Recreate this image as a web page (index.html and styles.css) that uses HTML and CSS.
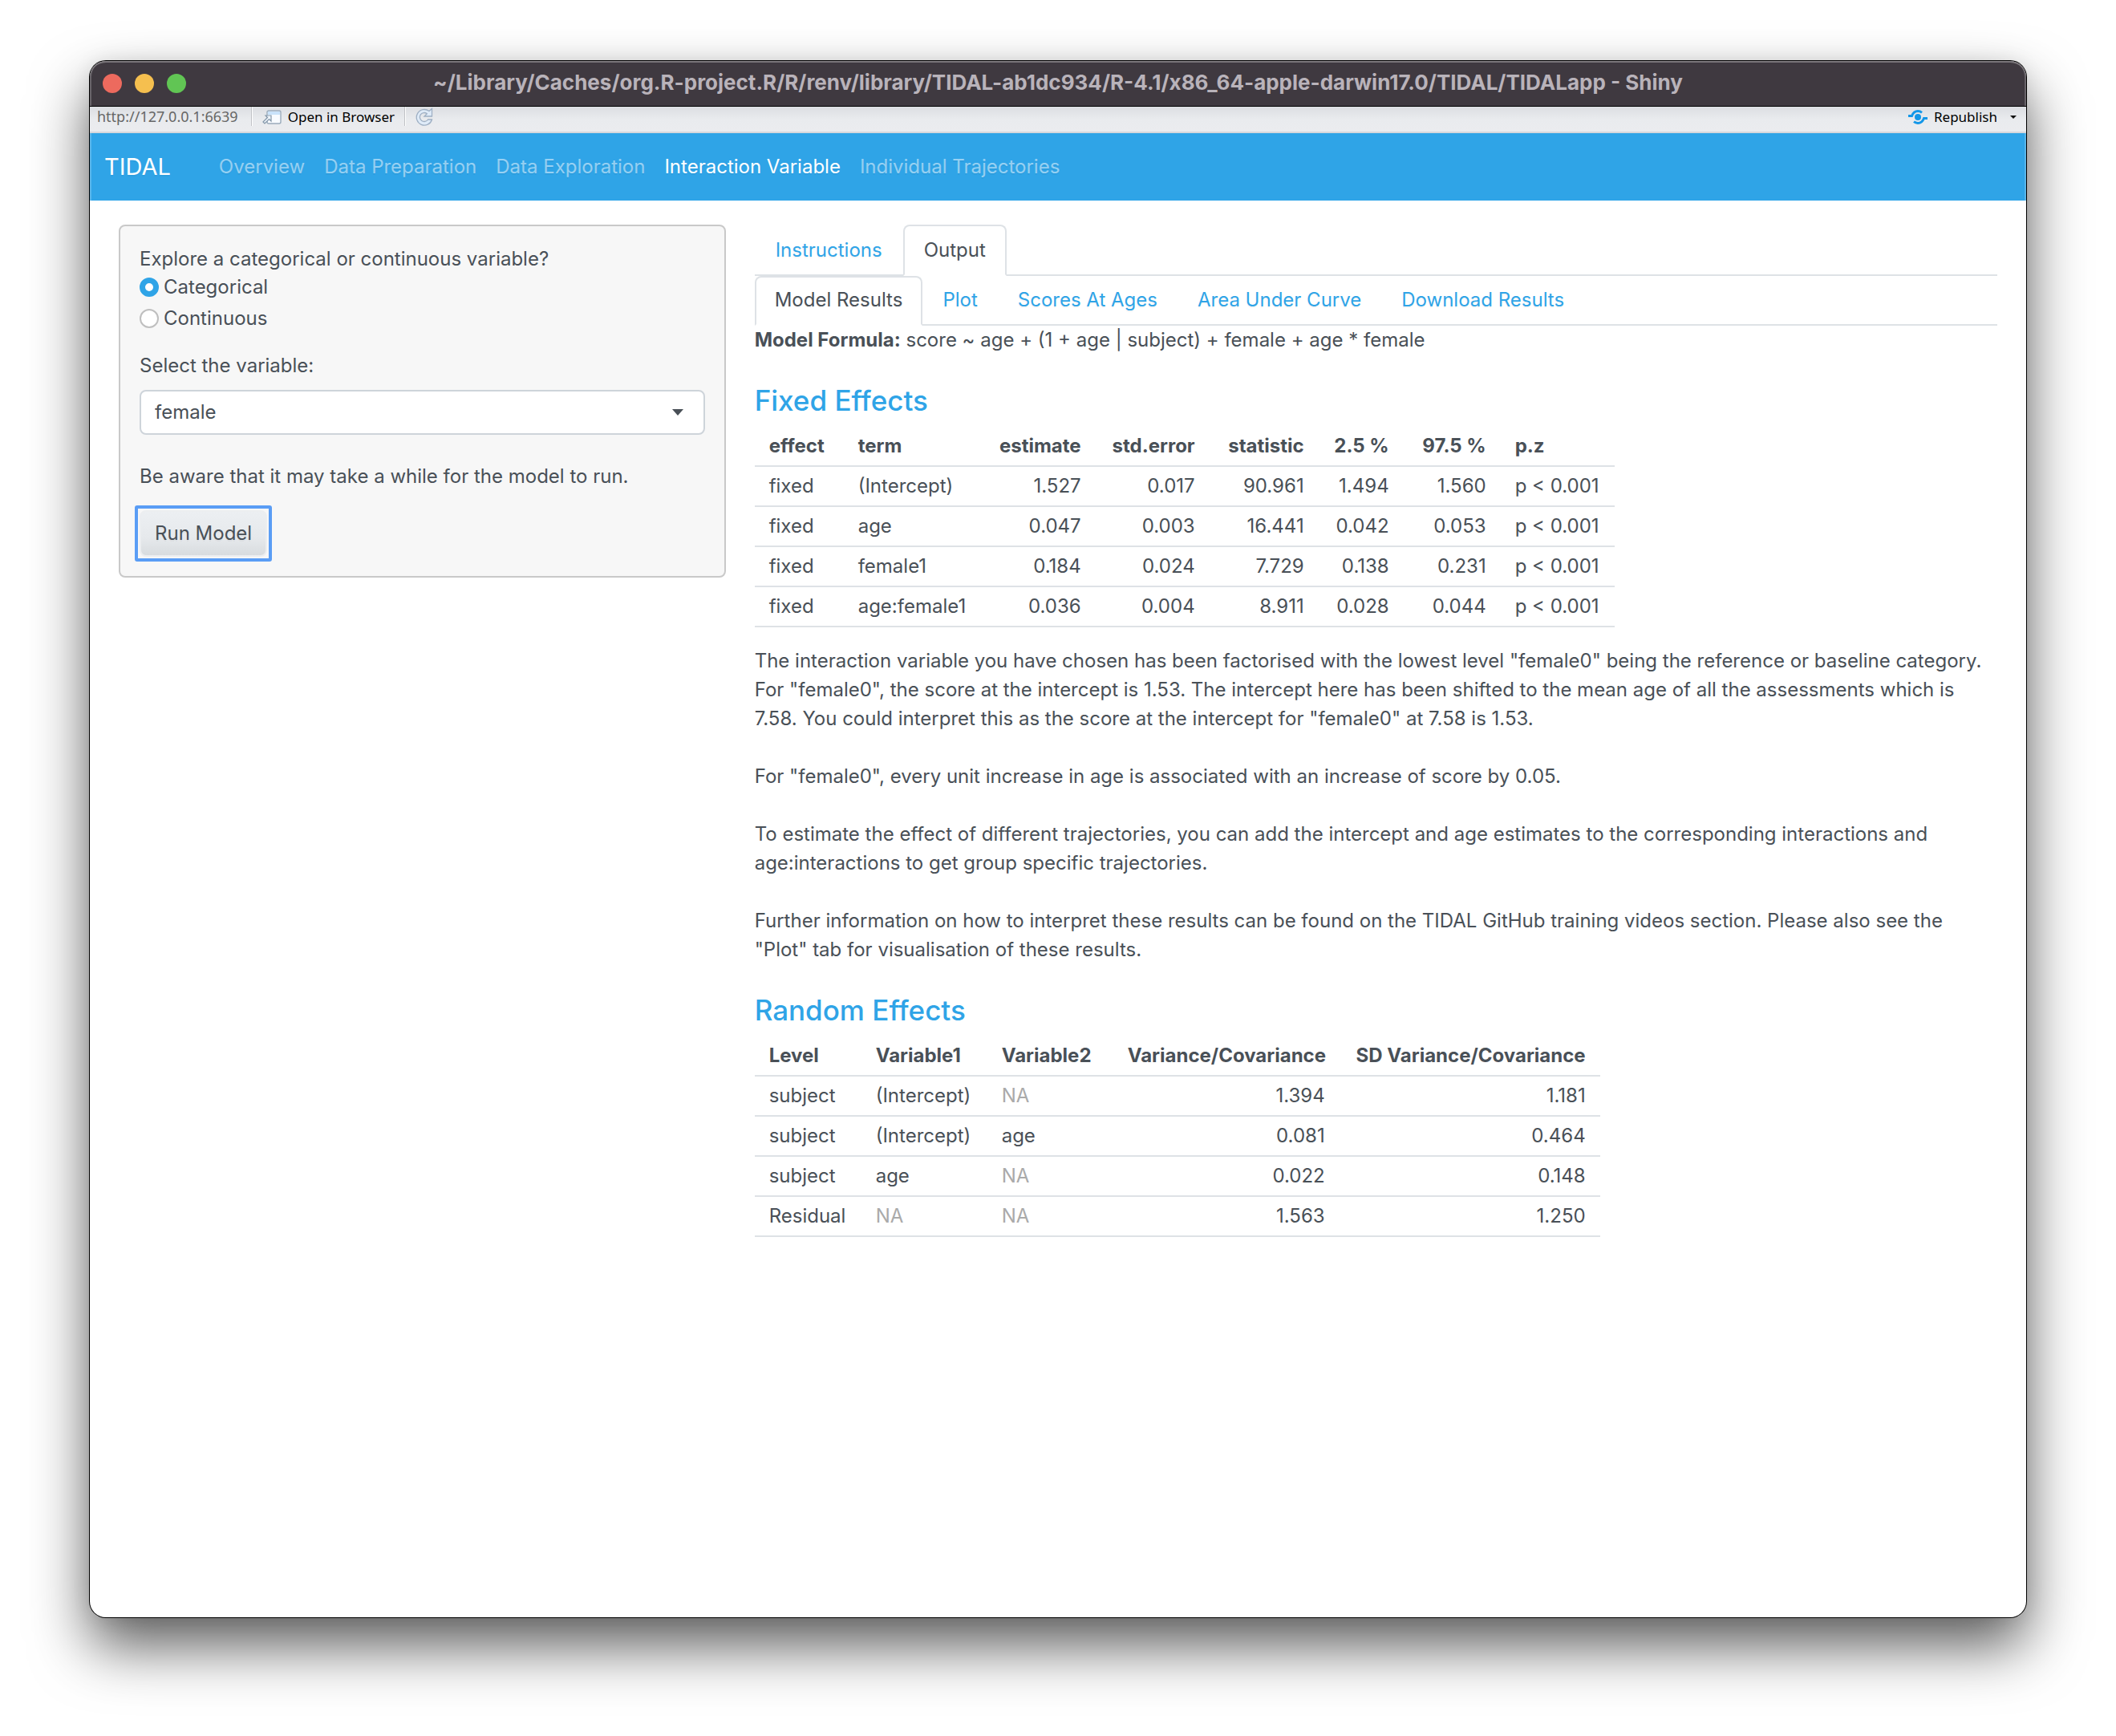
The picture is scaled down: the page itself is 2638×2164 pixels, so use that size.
FILE: index.html
```html
<!DOCTYPE html>
<html lang="en">
<head>
<meta charset="utf-8">
<title>TIDAL</title>
<link rel="stylesheet" href="styles.css">
</head>
<body>
<div class="window">
  <header class="titlebar">
    <div class="lights"><span class="light red"></span><span class="light amber"></span><span class="light green"></span></div>
    <div class="title">~/Library/Caches/org.R-project.R/R/renv/library/TIDAL-ab1dc934/R-4.1/x86_64-apple-darwin17.0/TIDAL/TIDALapp - Shiny</div>
  </header>
  <div class="toolbar">
    <span class="url">http://127.0.0.1:6639</span>
    <span class="divider"></span>
    <button class="tool" type="button">
      <svg width="24" height="18" viewBox="0 0 24 18"><rect x="6" y="1" width="17" height="16" rx="2" fill="#f8fbff" stroke="#9aabbb" stroke-width="1.4"/><path d="M7 2h15v4H7z" fill="#c9e2fa"/><path d="M1 15l5.500-5.500L4 7h7v7l-2.500-2.500L3 17z" fill="#eef4fa" stroke="#8497a9" stroke-width="1.200"/></svg>
      Open in Browser
    </button>
    <span class="divider"></span>
    <button class="tool" type="button" aria-label="Reload">
      <svg width="22" height="24" viewBox="0 0 22 24"><path d="M17 4.500L20.500 1.500V11H11l3.300-3.300A5.500 5.500 0 1 0 15.500 15H20.500A9.800 9.800 0 1 1 17 4.500z" fill="#dfebf8" stroke="#9fb0c4" stroke-width="1.300"/></svg>
    </button>
    <button class="tool republish" type="button">
      <svg width="24" height="18" viewBox="0 0 24 18"><circle cx="12" cy="9" r="4" fill="#1397e8"/><path d="M0 7.500h4.500C6 3.500 9 1.500 12 1.500c2 0 3.500.6 5 1.800M24 10.500h-4.500C18 14.500 15 16.500 12 16.500c-2 0-3.500-.6-5-1.800" fill="none" stroke="#1397e8" stroke-width="3"/></svg>
      Republish
      <svg class="drop" width="8" height="4" viewBox="0 0 8 4"><path d="M0 0h8L4 4z" fill="#111"/></svg>
    </button>
  </div>
  <nav class="navbar">
    <a class="brand" href="#">TIDAL</a>
    <a class="nav-link" href="#">Overview</a>
    <a class="nav-link" href="#">Data Preparation</a>
    <a class="nav-link" href="#">Data Exploration</a>
    <a class="nav-link active" href="#">Interaction Variable</a>
    <a class="nav-link" href="#">Individual Trajectories</a>
  </nav>
  <div class="layout">
    <form class="well">
      <fieldset class="choices">
        <legend>Explore a categorical or continuous variable?</legend>
        <label class="choice"><input type="radio" name="kind" checked>Categorical</label>
        <label class="choice"><input type="radio" name="kind">Continuous</label>
      </fieldset>
      <label class="field-label" for="variable">Select the variable:</label>
      <div class="select-wrap">
        <select id="variable"><option>female</option></select>
      </div>
      <p class="hint">Be aware that it may take a while for the model to run.</p>
      <button class="run" type="button">Run Model</button>
    </form>
    <main class="main">
      <nav class="tabs">
        <a class="tab" href="#">Instructions</a>
        <a class="tab active" href="#">Output</a>
      </nav>
      <nav class="tabs sub">
        <a class="tab active" href="#">Model Results</a>
        <a class="tab" href="#">Plot</a>
        <a class="tab" href="#">Scores At Ages</a>
        <a class="tab" href="#">Area Under Curve</a>
        <a class="tab" href="#">Download Results</a>
      </nav>
      <p class="formula"><b>Model Formula:</b> score ~ age + (1 + age | subject) + female + age * female</p>
      <h2>Fixed Effects</h2>
      <table class="fixed">
        <colgroup><col class="w-effect"><col class="w-term"><col class="w-est"><col class="w-est"><col class="w-stat"><col class="w-low"><col class="w-high"><col class="w-est"></colgroup>
        <thead><tr><th>effect</th><th>term</th><th class="num">estimate</th><th class="num">std.error</th><th class="num">statistic</th><th class="num">2.5 %</th><th class="num">97.5 %</th><th>p.z</th></tr></thead>
        <tbody>
          <tr><td>fixed</td><td>(Intercept)</td><td class="num">1.527</td><td class="num">0.017</td><td class="num">90.961</td><td class="num">1.494</td><td class="num">1.560</td><td>p &lt; 0.001</td></tr>
          <tr><td>fixed</td><td>age</td><td class="num">0.047</td><td class="num">0.003</td><td class="num">16.441</td><td class="num">0.042</td><td class="num">0.053</td><td>p &lt; 0.001</td></tr>
          <tr><td>fixed</td><td>female1</td><td class="num">0.184</td><td class="num">0.024</td><td class="num">7.729</td><td class="num">0.138</td><td class="num">0.231</td><td>p &lt; 0.001</td></tr>
          <tr><td>fixed</td><td>age:female1</td><td class="num">0.036</td><td class="num">0.004</td><td class="num">8.911</td><td class="num">0.028</td><td class="num">0.044</td><td>p &lt; 0.001</td></tr>
        </tbody>
      </table>
      <div class="prose">
        <p>The interaction variable you have chosen has been factorised with the lowest level "female0" being the reference or baseline category. For "female0", the score at the intercept is 1.53. The intercept here has been shifted to the mean age of all the assessments which is 7.58. You could interpret this as the score at the intercept for "female0" at 7.58 is 1.53.</p>
        <p>For "female0", every unit increase in age is associated with an increase of score by 0.05.</p>
        <p>To estimate the effect of different trajectories, you can add the intercept and age estimates to the corresponding interactions and age:interactions to get group specific trajectories.</p>
        <p>Further information on how to interpret these results can be found on the TIDAL GitHub training videos section. Please also see the "Plot" tab for visualisation of these results.</p>
      </div>
      <h2>Random Effects</h2>
      <table class="random">
        <colgroup><col class="w-level"><col class="w-var"><col class="w-var"><col class="w-cov"><col class="w-sd"></colgroup>
        <thead><tr><th>Level</th><th>Variable1</th><th>Variable2</th><th class="num">Variance/Covariance</th><th class="num">SD Variance/Covariance</th></tr></thead>
        <tbody>
          <tr><td>subject</td><td>(Intercept)</td><td class="na">NA</td><td class="num">1.394</td><td class="num">1.181</td></tr>
          <tr><td>subject</td><td>(Intercept)</td><td>age</td><td class="num">0.081</td><td class="num">0.464</td></tr>
          <tr><td>subject</td><td>age</td><td class="na">NA</td><td class="num">0.022</td><td class="num">0.148</td></tr>
          <tr><td>Residual</td><td class="na">NA</td><td class="na">NA</td><td class="num">1.563</td><td class="num">1.250</td></tr>
        </tbody>
      </table>
    </main>
  </div>
</div>
</body>
</html>
```

FILE: styles.css
```css
* { box-sizing: border-box; }

body {
  margin: 0;
  padding: 76px 112px 148px;
  min-height: 100vh;
  display: flex;
  background: #fff;
  color: #495057;
  font: 24px/36px Inter, "Liberation Sans", sans-serif;
}

a { text-decoration: none; }
p, h2 { margin: 0; }

.window {
  flex: 1;
  min-width: 0;
  display: flex;
  flex-direction: column;
  background: #fff;
  border-radius: 20px;
  overflow: hidden;
  box-shadow: 0 0 0 1px #000, 0 36px 72px rgba(0, 0, 0, 0.64), 0 0 24px rgba(0, 0, 0, 0.08);
}

.titlebar {
  display: grid;
  grid-template-columns: 160px 1fr 160px;
  align-items: center;
  height: 57px;
  padding: 0 16px;
  background: #3f3940;
  border-bottom: 1px solid #000;
  border-radius: 20px 20px 0 0;
  box-shadow: inset 0 2px #7b777b, inset 2px 0 #69646a, inset -2px 0 #69646a;
}
.lights { display: flex; gap: 16px; }
.light { width: 24px; height: 24px; border-radius: 50%; }
.red { background: #ed6a5e; }
.amber { background: #f5bf4f; }
.green { background: #61c554; }
.title {
  color: #b9b3ba;
  font-size: 26px;
  font-weight: 700;
  line-height: 32px;
  padding-bottom: 2px;
  text-align: center;
  white-space: nowrap;
}

.toolbar {
  display: flex;
  align-items: flex-start;
  height: 33px;
  padding: 0 12px 0 9px;
  background: linear-gradient(#dcdee2, #e9ebee 50%, #ebecef);
  border-bottom: 2px solid #d6d8dc;
  font: 18px/26px "Noto Sans", "Liberation Sans", sans-serif;
}
.url { margin-right: 4px; line-height: 24px; color: #666; }
.divider { width: 2px; height: 24px; margin: 0 12px; background: linear-gradient(90deg, #c0c2c6 50%, #fff 50%); }
.tool {
  display: flex;
  align-items: center;
  gap: 8px;
  height: 26px;
  padding: 0;
  border: 0;
  background: none;
  color: #000;
  font: inherit;
  font-size: 17px;
}
.republish { margin-left: auto; }
.drop { margin-left: 8px; }

.navbar {
  display: flex;
  align-items: center;
  height: 84px;
  padding: 0 18px;
  background: #2fa4e7;
  box-shadow: inset 2px 0 rgba(255, 255, 255, 0.2), inset -2px 0 rgba(255, 255, 255, 0.2);
  text-shadow: 0 2px 0 rgba(0, 0, 0, 0.05);
}
.brand { margin-right: 48px; color: #fff; font-size: 29px; }
.nav-link { padding: 0 12px; color: rgba(255, 255, 255, 0.5); white-space: nowrap; }
.nav-link.active { color: #fff; }

.layout {
  display: grid;
  grid-template-columns: repeat(12, minmax(0, 1fr));
  gap: 36px;
  align-items: start;
  padding: 30px 36px;
}

.well {
  grid-column: span 4;
  padding: 24px;
  background: #f7f7f7;
  border: 2px solid #c9c9c9;
  border-radius: 8px;
}
.choices { display: grid; gap: 4px; margin: 0 0 24px; padding: 0; border: 0; }
.choices legend { padding: 0; line-height: 34px; }
.choice { display: flex; align-items: center; gap: 6px; line-height: 35px; }
.choice input {
  appearance: none;
  width: 24px;
  height: 24px;
  margin: 0;
  background: #fff;
  border: 2px solid #bfbfbf;
  border-radius: 50%;
}
.choice input:checked { border: 7px solid #2fa4e7; }
.field-label { display: block; margin-bottom: 12px; }
.select-wrap { position: relative; margin-bottom: 34px; }
.select-wrap::after {
  content: "";
  position: absolute;
  top: 24px;
  right: 27px;
  border: 7px solid transparent;
  border-top: 8px solid #495057;
  border-bottom: 0;
}
select {
  appearance: none;
  display: block;
  width: 100%;
  height: 56px;
  padding: 0 17px;
  background: #fff;
  border: 2px solid #ced4da;
  border-radius: 8px;
  color: inherit;
  font: inherit;
}
.hint { margin-bottom: 24px; }
.run {
  position: relative;
  display: block;
  height: 58px;
  padding: 0 17px;
  border: 2px solid #eceef0;
  border-radius: 8px;
  background: linear-gradient(#eceff2, #e6e9ec 60%, #d8dcdf);
  color: inherit;
  font: inherit;
  text-shadow: 0 2px 0 rgba(0, 0, 0, 0.05);
}
/* focus ring */
.run::after {
  content: "";
  position: absolute;
  inset: -8px;
  border: 4px solid #5a9df5;
  border-radius: 3px;
}

.main { grid-column: span 8; }
.tabs {
  display: flex;
  height: 64px;
  border-bottom: 2px solid #dee2e6;
  text-shadow: 0 2px 0 rgba(0, 0, 0, 0.05);
}
.tab {
  height: 64px;
  padding: 12px 24px;
  border: 2px solid transparent;
  border-radius: 8px 8px 0 0;
  color: #2fa4e7;
  white-space: nowrap;
}
.tab.active { color: #495057; background: #fff; border-color: #dee2e6 #dee2e6 #fff; }
.sub, .sub .tab { height: 62px; }
.sub .tab { padding: 12px 23px; line-height: 32px; }

h2 {
  margin: 36px 0 12px;
  color: #2fa4e7;
  font-size: 35px;
  font-weight: 500;
  line-height: 42px;
}

table { table-layout: fixed; border-spacing: 0; }
th, td {
  height: 50px;
  padding: 6px 18px;
  border-bottom: 2px solid #dee2e6;
  text-align: left;
  white-space: nowrap;
}
th { font-weight: 700; }
.num { text-align: right; }
.na { color: #aaa; }
.fixed { width: 1072px; }
.random { width: 1054px; }
.w-effect { width: 111px; }
.w-term { width: 172px; }
.w-est { width: 142px; }
.w-stat { width: 136px; }
.w-low { width: 106px; }
.w-high { width: 121px; }
.w-level { width: 133px; }
.w-var { width: 157px; }
.w-cov { width: 282px; }
.w-sd { width: 325px; }

.prose { display: grid; gap: 36px; margin-top: 24px; }
```
